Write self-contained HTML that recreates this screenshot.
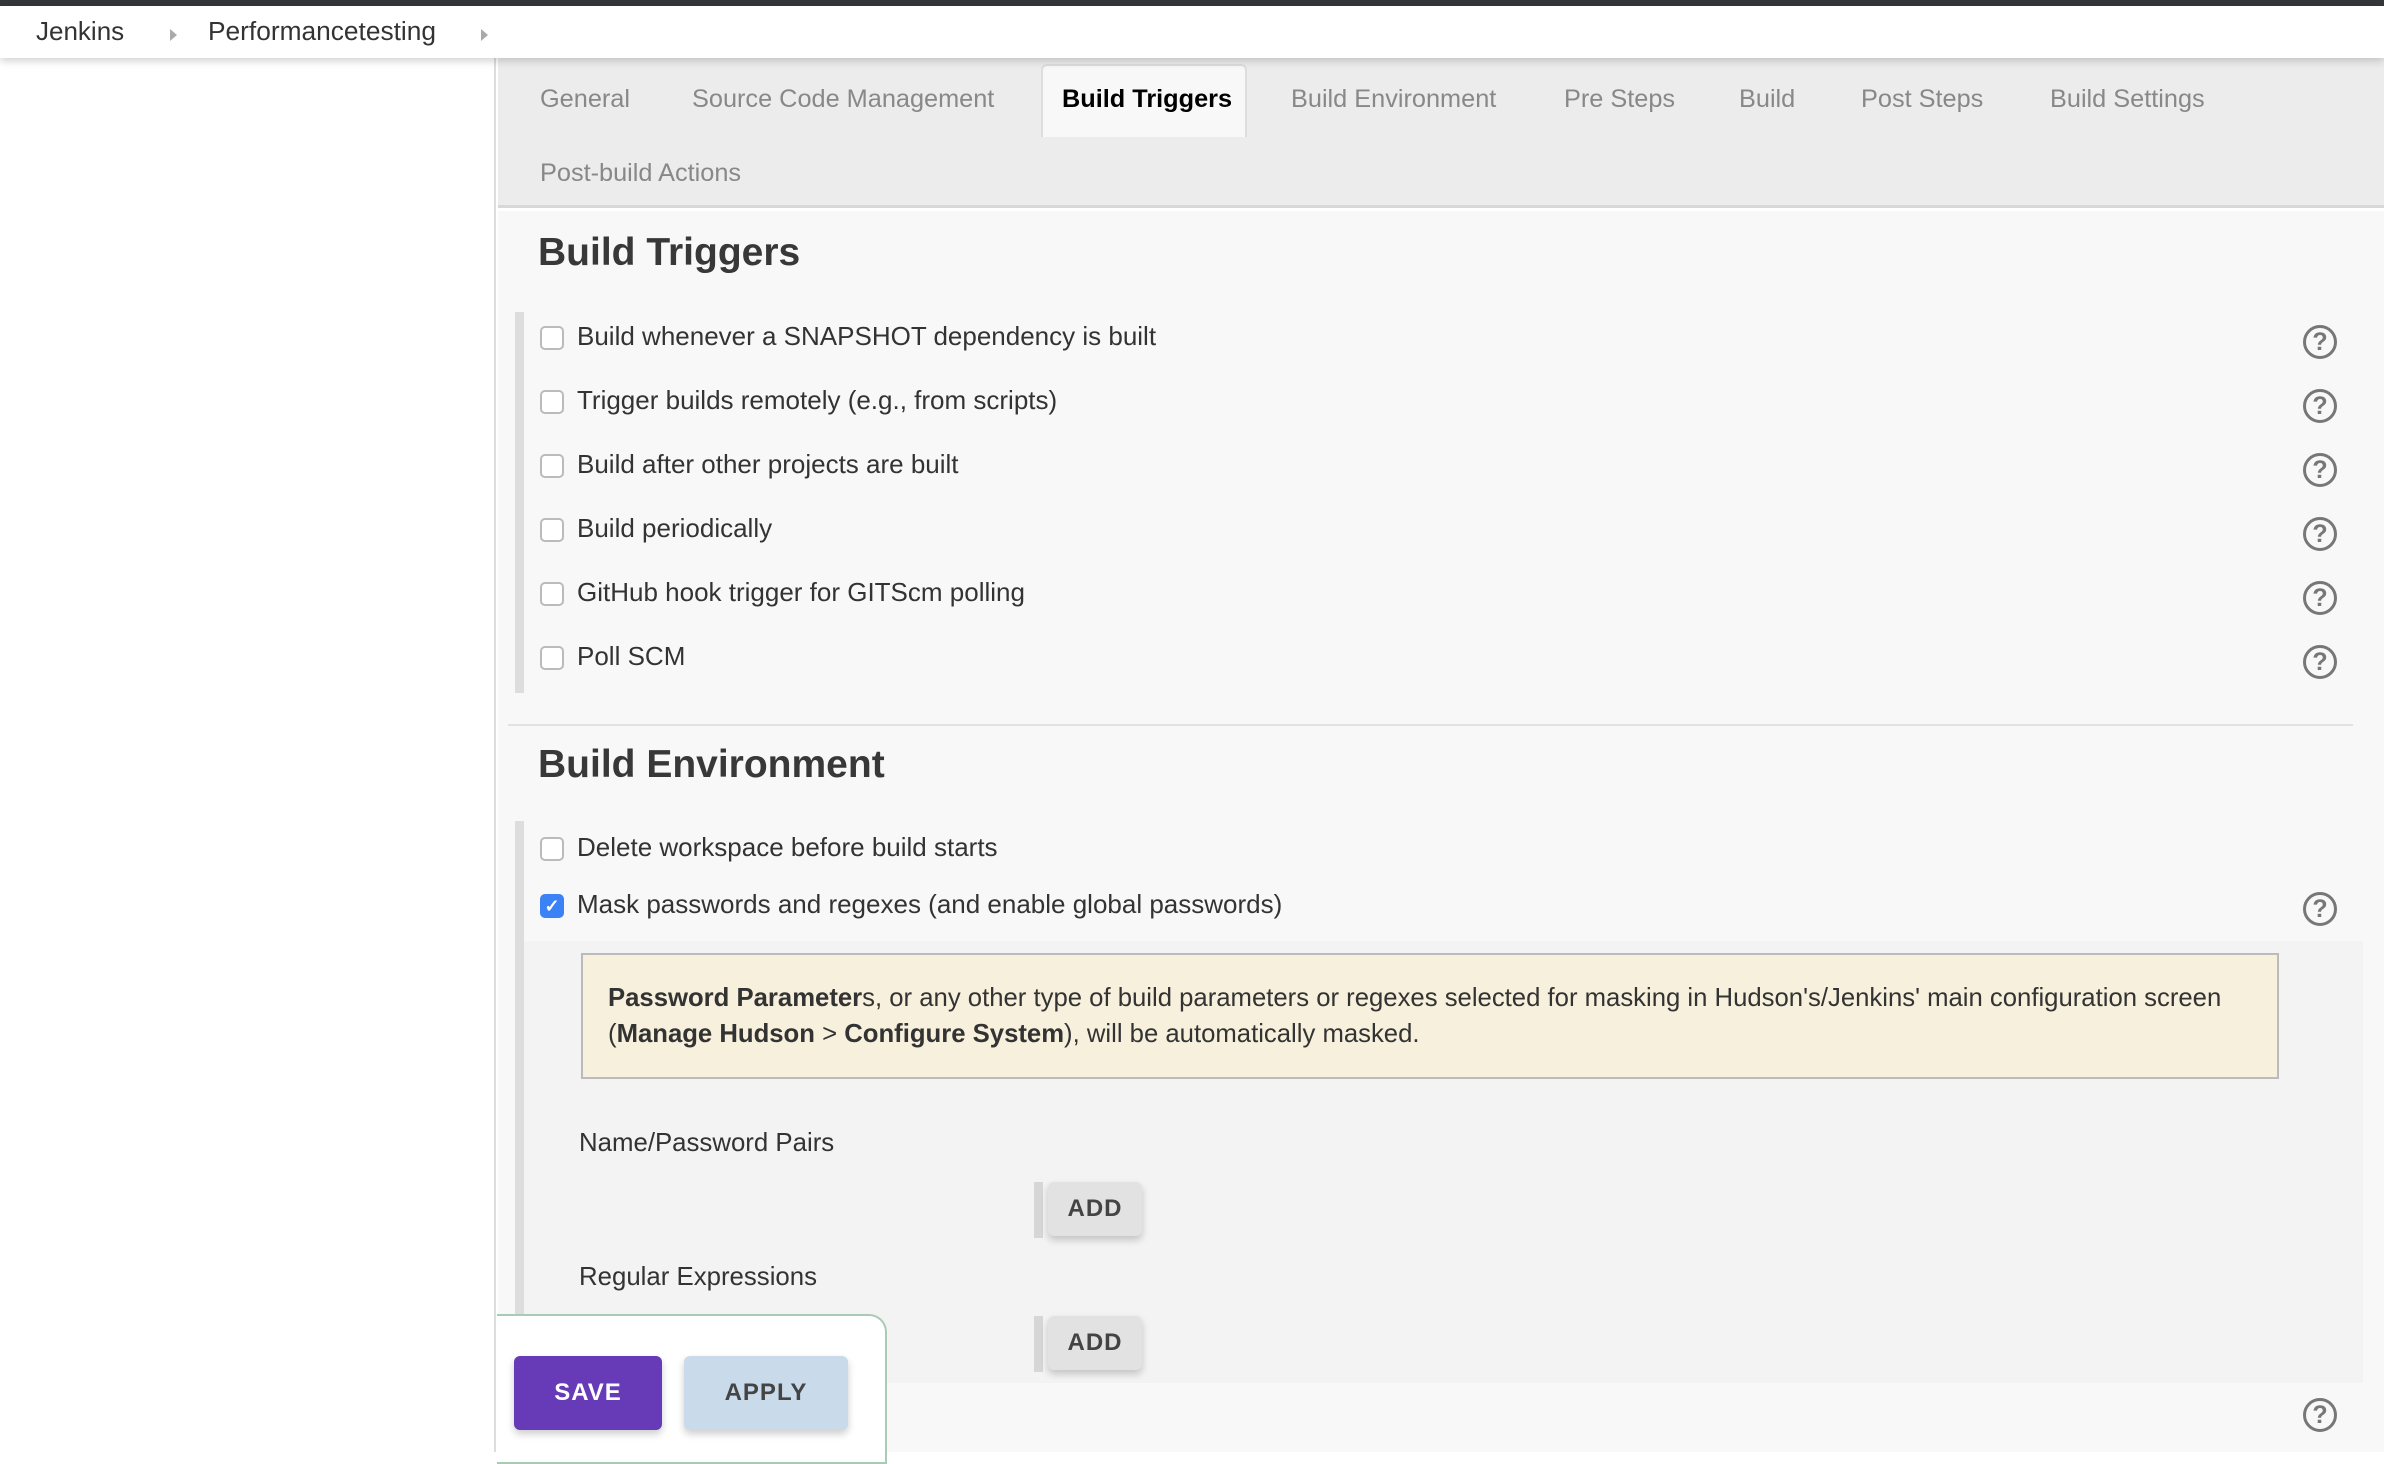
<!DOCTYPE html>
<html><head><meta charset="utf-8"><style>
*{box-sizing:border-box;margin:0;padding:0}
body{width:2384px;height:1452px;overflow:hidden;background:#fff;font-family:"Liberation Sans",Arial,sans-serif;color:#333;position:relative}
.abs{position:absolute}
.topbar{left:0;top:0;width:2384px;height:6px;background:#33373a}
.crumbs{left:0;top:6px;width:2384px;height:52px;background:#fff;box-shadow:0 3px 8px rgba(0,0,0,.18);z-index:5}
.crumbs span{position:absolute;top:10px;font-size:26px;color:#333}
.arr{position:absolute;top:23px;width:0;height:0;border-left:7px solid #aaa;border-top:6px solid transparent;border-bottom:6px solid transparent}
.side{left:0;top:58px;width:496px;height:1394px;background:#fff;border-right:2px solid #ddd}
.tabs{left:498px;top:58px;width:1886px;height:150px;background:#ececec;border-bottom:3px solid #d8d8d8}
.tab{position:absolute;font-size:25.3px;color:#888}
.active{left:1041px;top:64px;width:206px;height:73px;background:#f8f8f8;border:2px solid #ddd;border-bottom:none;border-radius:6px 6px 0 0;z-index:2}
.content{left:498px;top:211px;width:1886px;height:1241px;background:#f8f8f8}
h2{position:absolute;font-size:39px;font-weight:bold;color:#383838}
.bar{position:absolute;background:#ddd;width:9px}
.cb{position:absolute;left:540px;width:24px;height:24px;border:2px solid #bbb;border-radius:5px;background:#fff}
.lbl{position:absolute;left:577px;font-size:26px;color:#333}
.help{position:absolute;left:2303px;width:34px;height:34px;border:3px solid #777;border-radius:50%;text-align:center;font-size:25px;line-height:28px;color:#777;font-weight:bold}
.btn{position:absolute;border-radius:6px;font-weight:bold;font-size:24px;letter-spacing:1px;text-align:center;box-shadow:0 4px 8px rgba(0,0,0,.2)}
</style></head><body>
<div class="abs topbar"></div>
<div class="abs crumbs">
<span style="left:36px">Jenkins</span><div class="arr" style="left:170px"></div>
<span style="left:208px;font-size:26.3px">Performancetesting</span><div class="arr" style="left:481px"></div>
</div>
<div class="abs side"></div>
<div class="abs tabs"></div>
<div class="abs active"></div>
<div class="tab" style="left:540px;top:85px">General</div>
<div class="tab" style="left:692px;top:85px">Source Code Management</div>
<div class="tab" style="left:1062px;top:85px;color:#000;font-weight:bold;z-index:3">Build Triggers</div>
<div class="tab" style="left:1291px;top:85px">Build Environment</div>
<div class="tab" style="left:1564px;top:85px">Pre Steps</div>
<div class="tab" style="left:1739px;top:85px">Build</div>
<div class="tab" style="left:1861px;top:85px">Post Steps</div>
<div class="tab" style="left:2050px;top:85px">Build Settings</div>
<div class="tab" style="left:540px;top:159px">Post-build Actions</div>
<div class="abs content"></div>
<h2 style="left:538px;top:231px">Build Triggers</h2>
<div class="bar" style="left:515px;top:312px;height:381px"></div>
<div class="cb" style="top:326px"></div><div class="lbl" style="top:321px">Build whenever a SNAPSHOT dependency is built</div>
<div class="cb" style="top:390px"></div><div class="lbl" style="top:385px">Trigger builds remotely (e.g., from scripts)</div>
<div class="cb" style="top:454px"></div><div class="lbl" style="top:449px">Build after other projects are built</div>
<div class="cb" style="top:518px"></div><div class="lbl" style="top:513px">Build periodically</div>
<div class="cb" style="top:582px"></div><div class="lbl" style="top:577px">GitHub hook trigger for GITScm polling</div>
<div class="cb" style="top:646px"></div><div class="lbl" style="top:641px">Poll SCM</div>
<div class="help" style="top:325px">?</div>
<div class="help" style="top:389px">?</div>
<div class="help" style="top:453px">?</div>
<div class="help" style="top:517px">?</div>
<div class="help" style="top:581px">?</div>
<div class="help" style="top:645px">?</div>
<div class="abs" style="left:508px;top:724px;width:1845px;height:2px;background:#e2e2e2"></div>
<h2 style="left:538px;top:743px">Build Environment</h2>
<div class="bar" style="left:515px;top:821px;height:494px"></div>
<div class="cb" style="top:837px"></div><div class="lbl" style="top:832px">Delete workspace before build starts</div>
<div class="cb" style="top:894px;background:#3b82f6;border-color:#3b82f6;color:#fff;font-size:18px;line-height:20px;text-align:center;font-weight:bold">✓</div>
<div class="lbl" style="top:889px">Mask passwords and regexes (and enable global passwords)</div>
<div class="help" style="top:892px">?</div>
<div class="abs" style="left:524px;top:941px;width:1839px;height:442px;background:#f3f3f3"></div>
<div class="abs" style="left:581px;top:953px;width:1698px;height:126px;background:#f7f0dc;border:2px solid #bbb;font-size:25.7px;line-height:36px;padding:25px 25px;color:#333">
<b>Password Parameter</b>s, or any other type of build parameters or regexes selected for masking in Hudson's/Jenkins' main configuration screen (<b>Manage Hudson</b> &gt; <b>Configure System</b>), will be automatically masked.</div>
<div class="lbl" style="left:579px;top:1129px;font-size:25.8px">Name/Password Pairs</div>
<div class="abs" style="left:1034px;top:1182px;width:9px;height:56px;background:#d6d6d6"></div>
<div class="btn" style="left:1048px;top:1182px;width:94px;height:54px;background:#e2e2e2;color:#444;line-height:54px">ADD</div>
<div class="lbl" style="left:579px;top:1263px;font-size:25.8px">Regular Expressions</div>
<div class="abs" style="left:1034px;top:1316px;width:9px;height:56px;background:#d6d6d6"></div>
<div class="btn" style="left:1048px;top:1316px;width:94px;height:54px;background:#e2e2e2;color:#444;line-height:54px">ADD</div>
<div class="help" style="top:1398px">?</div>
<div class="abs" style="left:497px;top:1314px;width:390px;height:150px;background:#fff;border:2px solid #a9cbb6;border-left:none;border-radius:0 18px 0 0"></div>
<div class="btn" style="left:514px;top:1356px;width:148px;height:74px;background:#673ab7;color:#fff;line-height:74px">SAVE</div>
<div class="btn" style="left:684px;top:1356px;width:164px;height:74px;background:#c9dbeb;color:#444;line-height:74px">APPLY</div>
</body></html>
